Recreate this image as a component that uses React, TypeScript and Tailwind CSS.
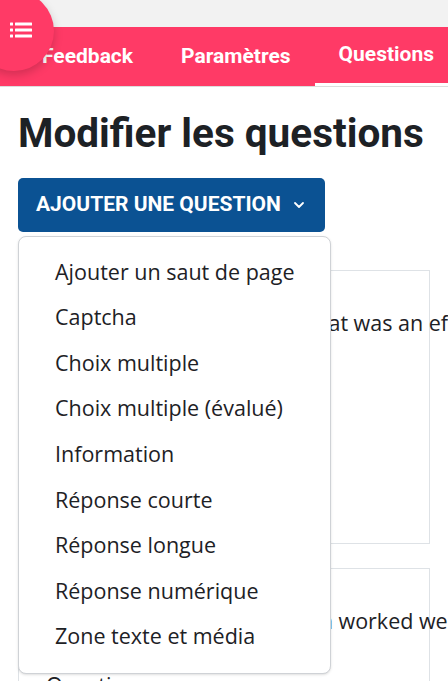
import { ChevronDown } from "lucide-react";

// Aperçu de l'éditeur de questions : barre d'onglets, titre, menu « Ajouter une question » ouvert.

const tabs = [
  { label: "Feedback", active: false },
  { label: "Paramètres", active: false },
  { label: "Questions", active: true },
];

const questionTypes = [
  "Ajouter un saut de page",
  "Captcha",
  "Choix multiple",
  "Choix multiple (évalué)",
  "Information",
  "Réponse courte",
  "Réponse longue",
  "Réponse numérique",
  "Zone texte et média",
];

function ListIcon() {
  return (
    <svg viewBox="0 0 22 16" className="h-4 w-[22px]" fill="currentColor">
      <rect x="0" y="0.5" width="3" height="3" rx="0.5" />
      <rect x="5" y="0.5" width="17" height="3" rx="0.5" />
      <rect x="0" y="6.5" width="3" height="3" rx="0.5" />
      <rect x="5" y="6.5" width="17" height="3" rx="0.5" />
      <rect x="0" y="12.5" width="3" height="3" rx="0.5" />
      <rect x="5" y="12.5" width="17" height="3" rx="0.5" />
    </svg>
  );
}

export default function App() {
  return (
    <div className="relative h-[681px] w-[448px] overflow-hidden bg-white font-['Roboto',sans-serif] text-[#1d2125]">
      <div className="h-[27px] bg-[#f2f2f2]" />

      <nav className="flex h-[60px] overflow-hidden whitespace-nowrap border-b border-[#dcdcdc] bg-[#ff3a66] pl-[18px]">
        {tabs.map((t) => (
          <div
            key={t.label}
            className={`flex shrink-0 items-center px-6 text-[21px] font-bold text-white ${
              t.active ? "border-b-[3px] border-white" : ""
            }`}
          >
            {t.label}
          </div>
        ))}
      </nav>

      <button
        type="button"
        className="absolute left-[-26px] top-[-9px] flex h-20 w-20 items-center justify-center rounded-full bg-[#ff3a66] pb-[2px] pl-[13px] text-white shadow-[0_4px_10px_rgba(0,0,0,0.18)]"
      >
        <ListIcon />
      </button>

      <main className="px-[18px]">
        <h1 className="mt-[22px] text-[40.5px] font-bold leading-[48px]">Modifier les questions</h1>

        <button
          type="button"
          className="mt-[21px] flex h-[54px] items-center gap-[10px] rounded-[5px] bg-[#0b5293] pl-[18px] pr-[18px] text-[21px] font-bold text-white"
        >
          AJOUTER UNE QUESTION
          <ChevronDown className="h-4 w-4" strokeWidth={2.75} />
        </button>

        <div className="mt-[38px] border border-[#dee2e6] font-['Open_Sans',sans-serif] text-[21.5px]">
          <div className="h-[272px] whitespace-nowrap pl-[27px] pt-[36px]">
            Please describe one thing that was an effective part
          </div>
        </div>
        <div className="mt-[24px] border border-[#dee2e6] font-['Open_Sans',sans-serif] text-[21.5px]">
          <div className="h-[140px] whitespace-nowrap pl-[27px] pt-[36px]">
            Which part of this discussion worked well?
            <div className="mt-[32px]">Question</div>
          </div>
        </div>
      </main>

      <div className="absolute left-[18px] top-[236px] w-[313px] rounded-lg border border-[#cfd2d6] bg-white pb-[14px] pt-[12px] font-['Open_Sans',sans-serif] shadow-sm">
        {questionTypes.map((q) => (
          <div key={q} className="flex h-[45.6px] items-center pl-[36px] text-[21.5px]">
            {q}
          </div>
        ))}
      </div>
    </div>
  );
}
